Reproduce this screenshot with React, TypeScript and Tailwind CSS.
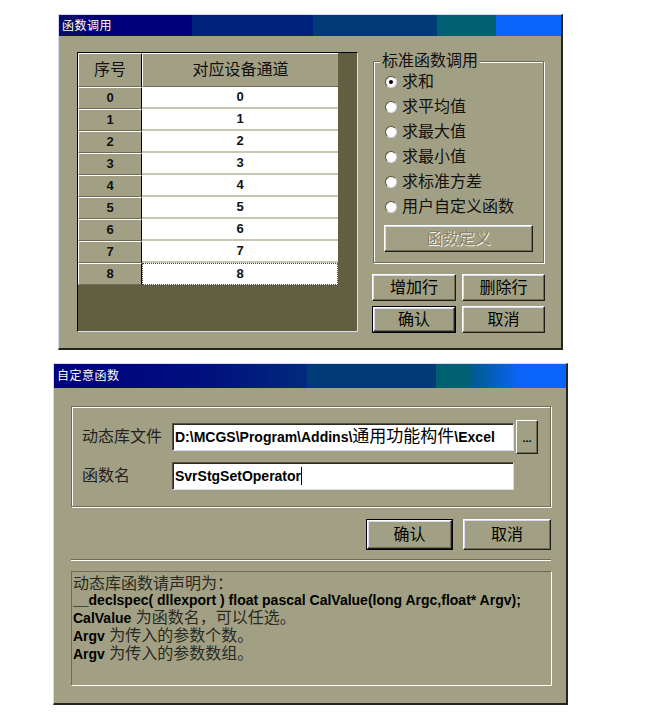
import React from "react";

const BG = "bg-[#a2a084]";

function TitleBar({ title, bands, h }: { title: string; bands: React.ReactNode; h: string }) {
  return (
    <div className={`relative flex ${h}`}>
      {bands}
      <span className="absolute left-[3px] top-0 bottom-0 flex items-center text-[12px] tracking-[0.5px] text-white leading-none">
        {title}
      </span>
    </div>
  );
}

function WinButton({
  children,
  w,
  h,
  primary,
  disabled,
}: {
  children: React.ReactNode;
  w: string;
  h: string;
  primary?: boolean;
  disabled?: boolean;
}) {
  const inner = (
    <div
      className={`flex-1 flex items-center justify-center border border-t-white border-l-white border-r-[#1e1e18] border-b-[#1e1e18] shadow-[inset_-1px_-1px_0_#6e6c56,inset_1px_1px_0_#dcdcf0] text-[16px] leading-none ${
        disabled ? "text-[#858369] [text-shadow:1px_1px_0_#f4f4f4]" : "text-black"
      }`}
    >
      {children}
    </div>
  );
  return (
    <div className={`${w} ${h} flex ${primary ? "border border-black" : ""}`}>{inner}</div>
  );
}

function Radio({ label, checked }: { label: string; checked?: boolean }) {
  return (
    <div className="h-[25px] flex items-center pl-[11px] gap-[5px]">
      <div className="w-[12px] h-[12px] rounded-full bg-white border border-t-[#55533f] border-l-[#55533f] border-r-[#d4d4f0] border-b-[#d4d4f0] flex items-center justify-center">
        {checked && <div className="w-[4px] h-[4px] rounded-full bg-black" />}
      </div>
      <span className="text-[16px] leading-none text-[#111]">{label}</span>
    </div>
  );
}

function Grid() {
  const rows = [0, 1, 2, 3, 4, 5, 6, 7, 8];
  return (
    <div className="w-[281px] h-[280px] bg-[#615f41] border border-t-black border-l-black border-r-[#dedcf0] border-b-[#dedcf0] flex flex-col">
      <div className="flex h-[34px] w-[260px]">
        <div className={`w-[64px] ${BG} border-t border-l border-t-white border-l-white border-r border-r-black border-b border-b-[#6e6c56] flex items-center justify-center text-[16px] text-[#111]`}>
          序号
        </div>
        <div className={`w-[196px] ${BG} border-t border-l border-t-white border-l-white border-b border-b-[#6e6c56] flex items-center justify-center text-[16px] text-[#111]`}>
          对应设备通道
        </div>
      </div>
      {rows.map((r) => (
        <div key={r} className="flex h-[22px] w-[260px]">
          <div className={`w-[64px] ${BG} border-t border-l border-t-white border-l-white border-r border-r-black border-b border-b-[#6e6c56] flex items-center justify-center text-[13px] font-bold text-[#111]`}>
            {r}
          </div>
          {r === 8 ? (
            <div className="w-[196px] bg-white border border-dotted border-[#444] flex items-center justify-center text-[13px] font-bold text-[#111]">
              {r}
            </div>
          ) : (
            <div className="w-[196px] bg-white border-b-2 border-b-[#c9c7b1] flex items-center justify-center text-[13px] font-bold text-[#111]">
              {r}
            </div>
          )}
        </div>
      ))}
    </div>
  );
}

function FunctionDialog() {
  return (
    <div className={`ml-[58px] mt-[14px] w-[505px] h-[336px] ${BG} border-t border-l border-t-[#d8d8f4] border-l-[#d8d8f4] border-r-2 border-b-2 border-r-[#26261e] border-b-[#26261e] flex flex-col`}>
      <TitleBar
        title="函数调用"
        h="h-[21px]"
        bands={
          <>
            <div className="w-[27px] bg-[#0a0a68]" />
            <div className="w-[106px] bg-[#00007c]" />
            <div className="w-[121px] bg-[#00217c]" />
            <div className="w-[124px] bg-[#003a77]" />
            <div className="w-[59px] bg-[#005f70]" />
            <div className="flex-1 bg-[#0a64fa]" />
          </>
        }
      />
      <div className="flex pl-[18px] pt-[16px]">
        <Grid />
        <div className="ml-[14px] w-[173px] flex flex-col">
          <div className="relative mt-[9px] ml-[1px] w-[171px] h-[202px] border border-[#6e6c56] shadow-[inset_1px_1px_0_#fff,1px_1px_0_#fff] pt-[7px]">
            <span className={`absolute -top-[10px] left-[6px] px-[2px] ${BG} text-[16px] leading-[18px] text-[#111]`}>
              标准函数调用
            </span>
            <Radio label="求和" checked />
            <Radio label="求平均值" />
            <Radio label="求最大值" />
            <Radio label="求最小值" />
            <Radio label="求标准方差" />
            <Radio label="用户自定义函数" />
            <div className="ml-[10px] mt-[6px]">
              <WinButton w="w-[149px]" h="h-[27px]" disabled>
                函数定义
              </WinButton>
            </div>
          </div>
          <div className="flex gap-[6px] mt-[11px]">
            <WinButton w="w-[84px]" h="h-[27px]">增加行</WinButton>
            <WinButton w="w-[83px]" h="h-[27px]">删除行</WinButton>
          </div>
          <div className="flex gap-[6px] mt-[5px]">
            <WinButton w="w-[84px]" h="h-[27px]" primary>确认</WinButton>
            <WinButton w="w-[83px]" h="h-[27px]">取消</WinButton>
          </div>
        </div>
      </div>
    </div>
  );
}

function Field({ children }: { children: React.ReactNode }) {
  return (
    <div className="w-[342px] h-[28px] bg-white border border-t-[#55533f] border-l-[#55533f] border-r-[#dcdcf4] border-b-[#dcdcf4] shadow-[inset_1px_1px_0_#2a2a22] flex items-center pl-[2px] text-[14px] font-bold text-black whitespace-nowrap overflow-hidden">
      {children}
    </div>
  );
}

function CustomDialog() {
  return (
    <div className={`ml-[53px] mt-[13px] w-[515px] h-[342px] ${BG} border-t border-l border-t-[#d8d8f4] border-l-[#d8d8f4] border-r-2 border-b-2 border-r-[#26261e] border-b-[#26261e] flex flex-col`}>
      <TitleBar
        title="自定意函数"
        h="h-[24px]"
        bands={
          <>
            <div className="w-[253px] bg-[linear-gradient(90deg,#00007e,#00107e_60%,#002a7c)]" />
            <div className="w-[129px] bg-[#003a77]" />
            <div className="w-[34px] bg-[#005f70]" />
            <div className="w-[50px] bg-[linear-gradient(90deg,#005a88,#0a64fa)]" />
            <div className="flex-1 bg-[#0a64fa]" />
          </>
        }
      />
      <div className="pl-[17px] pt-[18px] flex flex-col">
        <div className="w-[480px] h-[101px] border border-[#6e6c56] shadow-[inset_1px_1px_0_#fff,1px_1px_0_#fff] pt-[13px] pl-[10px]">
          <div className="flex items-center h-[34px]">
            <span className="w-[90px] text-[16px] leading-none text-[#222]">动态库文件</span>
            <Field>
              {"D:\\MCGS\\Program\\Addins\\"}
              <span className="text-[17px] font-normal">通用功能构件</span>
              {"\\Excel"}
            </Field>
            <div className="ml-[2px] w-[22px] h-[34px] flex items-end justify-center pb-[9px] border border-t-white border-l-white border-r-[#1e1e18] border-b-[#1e1e18] shadow-[inset_-1px_-1px_0_#6e6c56] text-[11px] font-bold leading-none">
              ...
            </div>
          </div>
          <div className="flex items-center mt-[8px]">
            <span className="w-[90px] text-[16px] leading-none text-[#222]">函数名</span>
            <Field>
              SvrStgSetOperator
              <span className="inline-block w-[1px] h-[18px] bg-black" />
            </Field>
          </div>
        </div>
        <div className="w-[480px] flex justify-end gap-[10px] mt-[12px]">
          <WinButton w="w-[87px]" h="h-[31px]" primary>确认</WinButton>
          <WinButton w="w-[88px]" h="h-[31px]">取消</WinButton>
        </div>
        <div className="w-[480px] h-[2px] mt-[9px] border-t border-t-[#6e6c56] border-b border-b-white" />
        <div className="w-[481px] h-[115px] mt-[10px] border border-t-[#6e6c56] border-l-[#6e6c56] border-r-white border-b-white pt-[3px] pl-[1px] text-[16px] leading-[17px] text-[#2a2a22]">
          <div>动态库函数请声明为：</div>
          <div className="text-[14px] font-bold text-black">
            __declspec( dllexport ) float pascal CalValue(long Argc,float* Argv);
          </div>
          <div>
            <b className="text-[14px] text-black">CalValue</b> 为函数名，可以任选。
          </div>
          <div>
            <b className="text-[14px] text-black">Argv</b> 为传入的参数个数。
          </div>
          <div>
            <b className="text-[14px] text-black">Argv</b> 为传入的参数数组。
          </div>
        </div>
      </div>
    </div>
  );
}

export default function App() {
  return (
    <div className="w-[657px] h-[716px] bg-white overflow-hidden flex flex-col font-['Liberation_Sans','Noto_Sans_CJK_SC',sans-serif]">
      <FunctionDialog />
      <CustomDialog />
    </div>
  );
}
